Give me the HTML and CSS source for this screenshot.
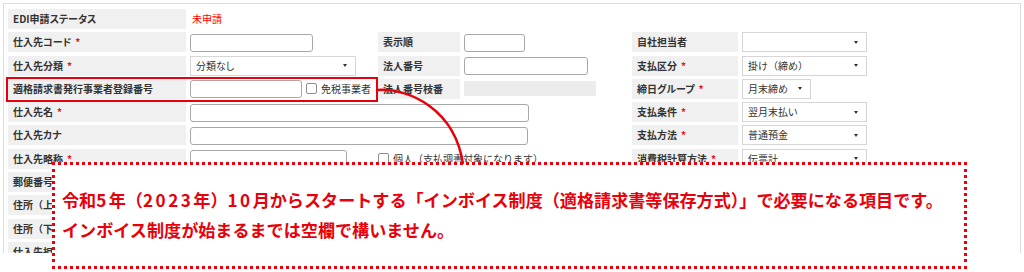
FILE: index.html
```html
<!DOCTYPE html>
<html lang="ja">
<head>
<meta charset="utf-8">
<title>仕入先登録</title>
<link rel="stylesheet" href="styles.css">
</head>
<body>
<div class="page">
  <div class="panel">
    <div class="form">
      <div class="lbl">EDI申請ステータス</div>
      <div class="val span-rest"><span class="status">未申請</span></div>

      <div class="lbl">仕入先コード<span class="req">*</span></div>
      <div class="val"><input class="inp w-code" type="text"></div>
      <div class="lbl">表示順</div>
      <div class="val"><input class="inp w-order" type="text"></div>
      <div class="lbl">自社担当者</div>
      <div class="val"><div class="sel w-sel"><span class="sel-text"></span><span class="caret"></span></div></div>

      <div class="lbl">仕入先分類<span class="req">*</span></div>
      <div class="val"><div class="sel w-kind"><span class="sel-text">分類なし</span><span class="caret"></span></div></div>
      <div class="lbl">法人番号</div>
      <div class="val"><input class="inp w-corp" type="text"></div>
      <div class="lbl">支払区分<span class="req">*</span></div>
      <div class="val"><div class="sel w-sel"><span class="sel-text full-width">掛け（締め）</span><span class="caret"></span></div></div>

      <div class="lbl">適格請求書発行事業者登録番号</div>
      <div class="val"><input class="inp w-reg" type="text"><span class="chk"></span><span class="chk-text">免税事業者</span></div>
      <div class="lbl">法人番号枝番</div>
      <div class="val"><span class="disabled"></span></div>
      <div class="lbl">締日グループ<span class="req">*</span></div>
      <div class="val"><div class="sel w-close"><span class="sel-text">月末締め</span><span class="caret"></span></div></div>

      <div class="lbl">仕入先名<span class="req">*</span></div>
      <div class="val span-mid"><input class="inp w-name" type="text"></div>
      <div class="lbl">支払条件<span class="req">*</span></div>
      <div class="val"><div class="sel w-sel"><span class="sel-text">翌月末払い</span><span class="caret"></span></div></div>

      <div class="lbl">仕入先カナ</div>
      <div class="val span-mid"><input class="inp w-kana" type="text"></div>
      <div class="lbl">支払方法<span class="req">*</span></div>
      <div class="val"><div class="sel w-sel"><span class="sel-text">普通預金</span><span class="caret"></span></div></div>

      <div class="lbl">仕入先略称<span class="req">*</span></div>
      <div class="val span-mid"><input class="inp w-short" type="text"><span class="chk chk-far"></span><span class="chk-text full-width">個人（支払調書対象になります）</span></div>
      <div class="lbl">消費税計算方法<span class="req">*</span></div>
      <div class="val"><div class="sel w-sel"><span class="sel-text">伝票計</span><span class="caret"></span></div></div>

      <div class="lbl">郵便番号</div>
      <div class="val span-rest"><input class="inp w-order" type="text"></div>

      <div class="lbl full-width">住所（上）</div>
      <div class="val span-rest"><input class="inp w-name" type="text"></div>

      <div class="lbl full-width">住所（下）</div>
      <div class="val span-rest"><input class="inp w-name" type="text"></div>

      <div class="lbl">仕入先担当者</div>
      <div class="val span-rest"><input class="inp w-code" type="text"></div>
    </div>
  </div>

  <div class="mark-box"></div>

  <div class="callout">
    <p class="callout-line">令和<span class="num">5</span>年（<span class="num">2023</span>年）<span class="num">10</span>月からスタートする「インボイス制度（適格請求書等保存方式）」で必要になる項目です。</p>
    <p class="callout-line">インボイス制度が始まるまでは空欄で構いません。</p>
  </div>

  <svg class="pointer" width="1024" height="272" viewBox="0 0 1024 272" aria-hidden="true">
    <path d="M378 90 C410 88 455 110 463 164" fill="none" stroke="#e8000b" stroke-width="2.5"/>
  </svg>
</div>
</body>
</html>
```

FILE: styles.css
```css
* { box-sizing: border-box; }

html, body {
  margin: 0;
  padding: 0;
  background: #fff;
}

body {
  font-family: "Noto Sans CJK JP", "Noto Sans", sans-serif;
  color: #333;
}

.page {
  position: relative;
  width: 1024px;
  height: 272px;
  overflow: hidden;
}

.panel {
  margin: 3px 0 0 3px;
  width: 1018px;
  height: 250px;
  border: 1px solid #dcdcdc;
  border-bottom: none;
  padding: 5px 0 0 4px;
  overflow: hidden;
}

.form {
  display: grid;
  grid-template-columns: 178px 184px 82px 164px 106px 274px;
  column-gap: 4px;
  row-gap: 3.3px;
  grid-auto-rows: 20px;
}

.lbl {
  background: #f0f0f0;
  font-size: 10px;
  font-weight: bold;
  line-height: 12px;
  padding-left: 5px;
  display: flex;
  align-items: center;
  white-space: nowrap;
  font-feature-settings: "palt";
  color: #333;
}

.full-width { font-feature-settings: normal; }

.req {
  color: #ee1111;
  font-size: 10px;
  margin-left: 4px;
}

.val {
  display: flex;
  align-items: center;
  gap: 4px;
  font-size: 10px;
  line-height: 12px;
  white-space: nowrap;
  font-feature-settings: "palt";
}

.span-rest { grid-column: 2 / -1; }
.span-mid { grid-column: 2 / 5; }

.status {
  color: #f00;
  padding-left: 2px;
}

.inp {
  -webkit-appearance: none;
  appearance: none;
  height: 18px;
  margin: 1px 0 0 0;
  padding: 0 4px;
  border: 1px solid #a8a8a8;
  border-radius: 3px;
  background: #fff;
  font: inherit;
}

.w-code { width: 123px; }
.w-order { width: 61px; }
.w-corp { width: 124px; }
.w-reg { width: 112px; }
.w-name { width: 339px; }
.w-kana { width: 338px; }
.w-short { width: 157px; }

.sel {
  height: 20px;
  border: 1px solid #d6d6d6;
  background: #fff;
  display: flex;
  align-items: center;
  padding-left: 5px;
  color: #333;
}

.sel-text { flex: 1; }

.caret {
  width: 0;
  height: 0;
  border-left: 2.5px solid transparent;
  border-right: 2.5px solid transparent;
  border-top: 3px solid #333;
  margin-right: 8px;
}

.w-sel { width: 125px; }
.w-kind { width: 166px; }
.w-close { width: 69px; }

.disabled {
  width: 132px;
  height: 15px;
  background: #ececec;
}

.chk {
  width: 11px;
  height: 11px;
  border: 1px solid #8f8f8f;
  border-radius: 2px;
  background: #fff;
  flex: none;
}

.chk-far { margin-left: 27px; }

.chk-text {
  color: #333;
  font-size: 10px;
}

.mark-box {
  position: absolute;
  left: 6px;
  top: 77px;
  width: 372px;
  height: 25px;
  border: 2px solid #e8000b;
}

.callout {
  position: absolute;
  left: 52px;
  top: 162px;
  width: 915px;
  height: 107px;
  border: 3px dotted #e8000b;
  background: #fff;
  padding: 20px 0 0 7px;
}

.callout-line {
  margin: 0;
  font-size: 17.1px;
  font-weight: bold;
  line-height: 30px;
  color: #e8000b;
  white-space: nowrap;
}

.num { letter-spacing: 2.5px; }

.pointer {
  position: absolute;
  left: 0;
  top: 0;
  pointer-events: none;
}
```
